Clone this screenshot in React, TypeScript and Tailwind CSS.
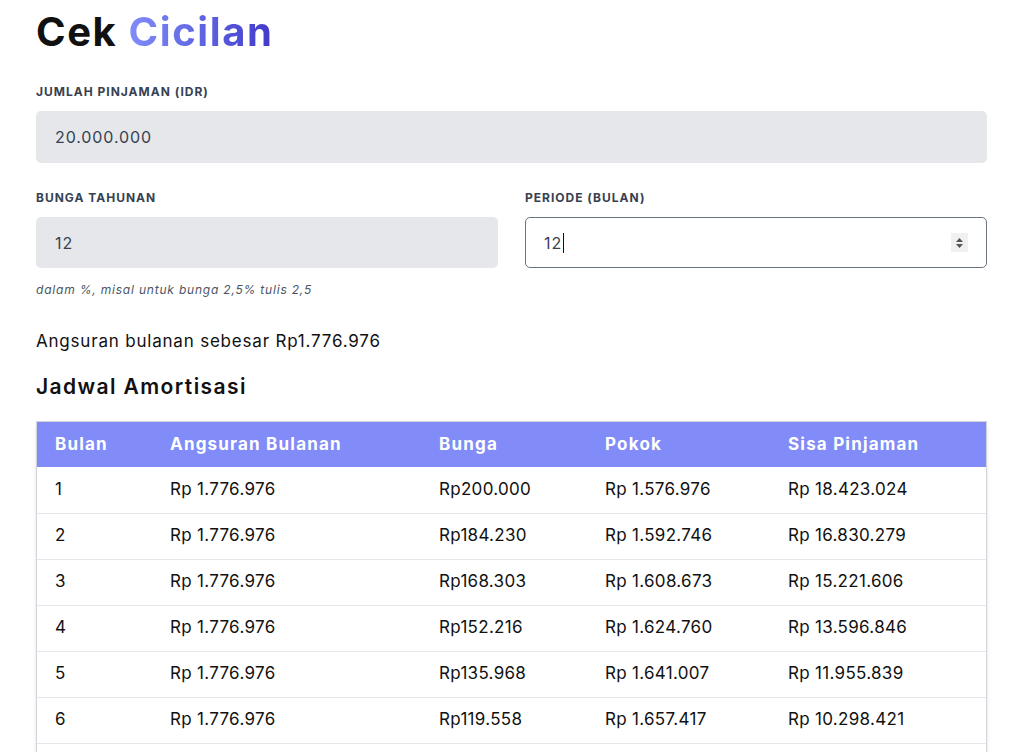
import React from "react";

const rows = [
  ["1", "Rp 1.776.976", "Rp200.000", "Rp 1.576.976", "Rp 18.423.024"],
  ["2", "Rp 1.776.976", "Rp184.230", "Rp 1.592.746", "Rp 16.830.279"],
  ["3", "Rp 1.776.976", "Rp168.303", "Rp 1.608.673", "Rp 15.221.606"],
  ["4", "Rp 1.776.976", "Rp152.216", "Rp 1.624.760", "Rp 13.596.846"],
  ["5", "Rp 1.776.976", "Rp135.968", "Rp 1.641.007", "Rp 11.955.839"],
  ["6", "Rp 1.776.976", "Rp119.558", "Rp 1.657.417", "Rp 10.298.421"],
  ["7", "Rp 1.776.976", "Rp102.984", "Rp 1.673.992", "Rp 8.624.429"],
];

export default function App() {
  return (
    <div className="min-h-screen bg-white" style={{ fontFamily: "Inter, 'Open Sans', sans-serif" }}>
      <div className="px-[36px] w-[1023px] pt-[7px]">
        <h1 className="text-[40px] font-bold leading-[50px] tracking-[1.6px] text-[#111111]">
          Cek{" "}
          <span className="bg-gradient-to-r from-[#818cf8] to-[#4338ca] bg-clip-text text-transparent">Cicilan</span>
        </h1>
        <div className="mt-[27px] text-[12px] font-bold text-[#374151] uppercase leading-[16px] tracking-[1px]">
          Jumlah Pinjaman (IDR)
        </div>
        <div className="mt-[11px] h-[52px] rounded-[5px] bg-[#e5e7eb] flex items-center pl-[19px] text-[16px] text-[#374151] tracking-[0.9px]">
          20.000.000
        </div>
        <div className="mt-[27px] grid grid-cols-2 gap-[27px]">
          <div>
            <div className="text-[12px] font-bold text-[#374151] uppercase leading-[16px] tracking-[1px]">Bunga Tahunan</div>
            <div className="mt-[11px] h-[51px] rounded-[5px] bg-[#e5e7eb] flex items-center pl-[19px] text-[16px] text-[#374151] tracking-[0.9px]">12</div>
            <div className="mt-[14px] text-[12px] italic text-[#4b5563] leading-[16px] tracking-[0.8px]">dalam %, misal untuk bunga 2,5% tulis 2,5</div>
          </div>
          <div>
            <div className="text-[12px] font-bold text-[#374151] uppercase leading-[16px] tracking-[1px]">Periode (Bulan)</div>
            <div className="mt-[11px] h-[51px] rounded-[5px] border border-[#6b7280] bg-white flex items-center pl-[18px] pr-[18px] text-[16px] text-[#374151] tracking-[0.9px]">
              <span>12</span>
              <span className="w-px h-[20px] bg-[#111] ml-[1px]" />
              <div className="ml-auto w-[17px] h-[19px] bg-[#f0f0f0] flex flex-col items-center justify-center gap-[2px]">
                <svg width="7" height="4" viewBox="0 0 7 4"><path d="M0 4 L3.5 0 L7 4Z" fill="#555" /></svg>
                <svg width="7" height="4" viewBox="0 0 7 4"><path d="M0 0 L3.5 4 L7 0Z" fill="#555" /></svg>
              </div>
            </div>
          </div>
        </div>
        <div className="mt-[31px] text-[17px] text-[#111] leading-[24px] tracking-[0.8px]">Angsuran bulanan sebesar Rp1.776.976</div>
        <h2 className="mt-[20px] text-[21px] font-semibold text-[#111] leading-[28px] tracking-[1.4px]">Jadwal Amortisasi</h2>
        <div className="mt-[20px] border border-[#d1d5db] shadow-md">
          <table className="w-full table-fixed border-collapse text-left">
            <colgroup>
              <col className="w-[115px]" />
              <col className="w-[269px]" />
              <col className="w-[166px]" />
              <col className="w-[183px]" />
              <col />
            </colgroup>
            <thead>
              <tr className="bg-[#818cf8] text-white h-[45px]">
                {["Bulan", "Angsuran Bulanan", "Bunga", "Pokok", "Sisa Pinjaman"].map((h) => (
                  <th key={h} className="pl-[18px] text-[17px] font-bold tracking-[1.2px]">{h}</th>
                ))}
              </tr>
            </thead>
            <tbody>
              {rows.map((r) => (
                <tr key={r[0]} className="h-[46px] border-b border-[#e5e7eb] text-[17px] text-[#111]">
                  {r.map((c, i) => (
                    <td key={i} className="pl-[18px] tracking-[0.3px]">{c}</td>
                  ))}
                </tr>
              ))}
            </tbody>
          </table>
        </div>
      </div>
    </div>
  );
}
